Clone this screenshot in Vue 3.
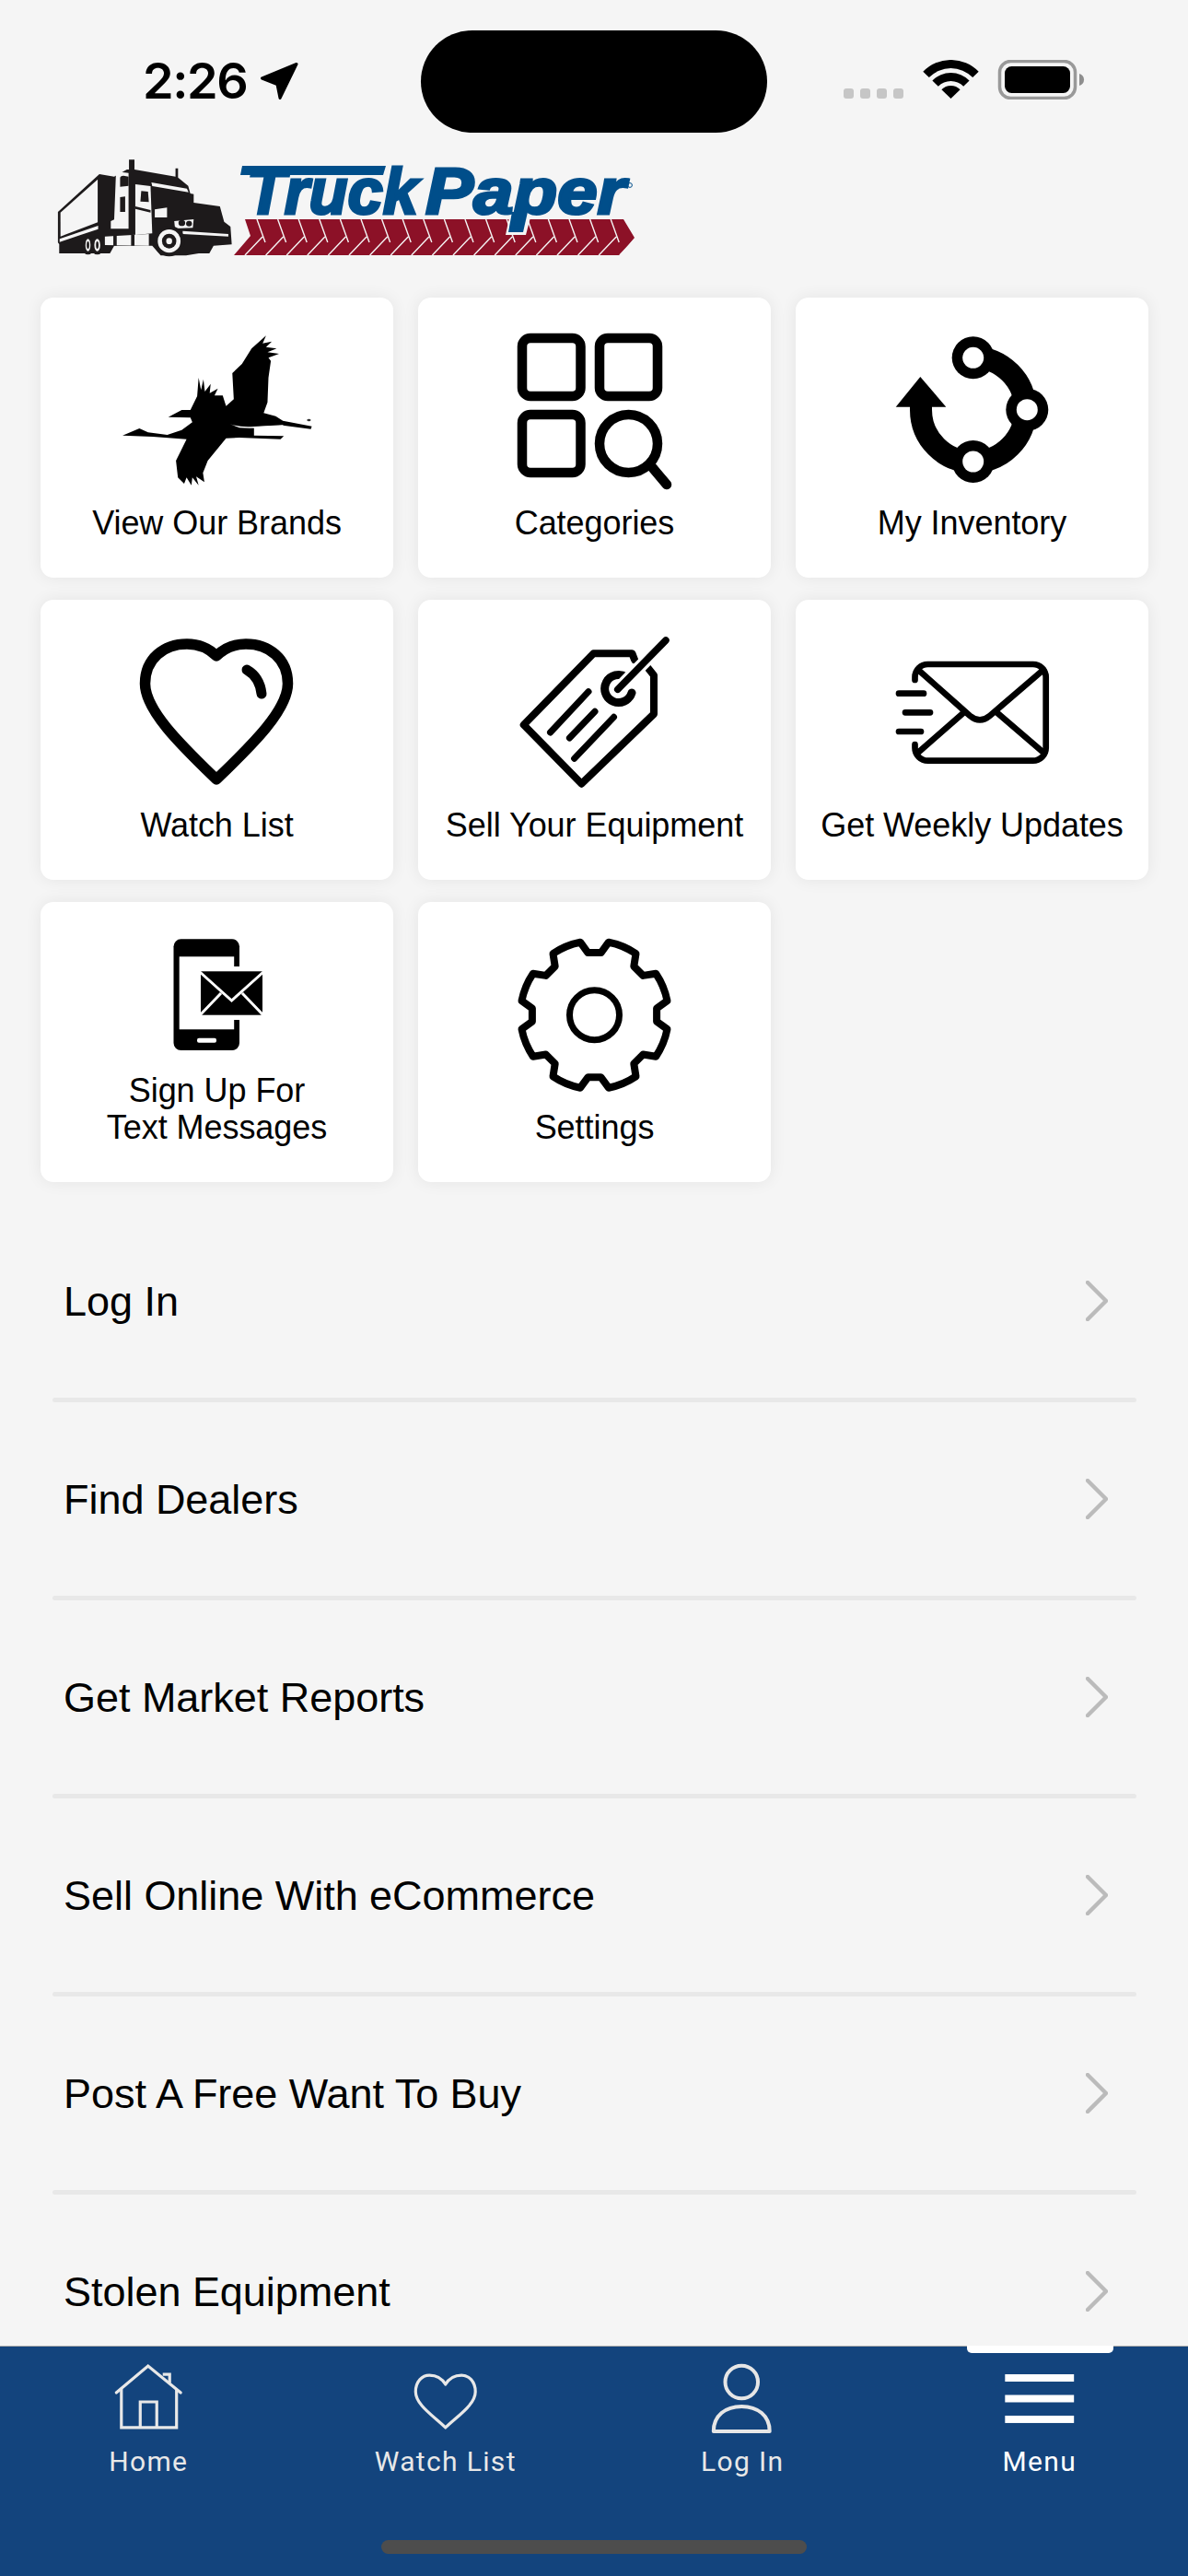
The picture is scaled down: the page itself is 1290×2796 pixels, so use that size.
<script setup>
const rows = ['Log In', 'Find Dealers', 'Get Market Reports', 'Sell Online With eCommerce', 'Post A Free Want To Buy', 'Stolen Equipment']

const chevrons = Array.from({ length: 19 }, (_, i) => {
  const x = 279 + i * 22.6
  return `M${x} 238 L${x + 9} 263 M${x + 6} 257 L${x - 13} 277`
})

function polar(cx, cy, r, deg) {
  const a = (deg - 90) * Math.PI / 180
  return [(cx + r * Math.cos(a)).toFixed(1), (cy + r * Math.sin(a)).toFixed(1)]
}

const gear = (() => {
  const c = [645.5, 1101.7]
  let d = ''
  for (let k = 0; k < 8; k++) {
    const m = k * 45
    const a = polar(c[0], c[1], 80.5, m - 11)
    const b = polar(c[0], c[1], 68, m - 6)
    const e = polar(c[0], c[1], 68, m + 6)
    const f = polar(c[0], c[1], 80.5, m + 11)
    const g = polar(c[0], c[1], 80.5, m + 34)
    d += `${k === 0 ? 'M' : 'L'}${a} L${b} L${e} L${f} A80.5 80.5 0 0 1 ${g} `
  }
  return d + 'Z'
})()

function sector(cx, cy, rIn, rOut, ang) {
  const a = polar(cx, cy, rOut, -ang)
  const b = polar(cx, cy, rOut, ang)
  if (rIn === 0) return `M${cx} ${cy} L${a} A${rOut} ${rOut} 0 0 1 ${b} Z`
  const e = polar(cx, cy, rIn, ang)
  const f = polar(cx, cy, rIn, -ang)
  return `M${a} A${rOut} ${rOut} 0 0 1 ${b} L${e} A${rIn} ${rIn} 0 0 0 ${f} Z`
}
const wifi = [sector(1032.5, 107, 0, 14, 46), sector(1032.5, 107, 19, 28, 46), sector(1032.5, 107, 33, 42, 46)]
</script>

<template>
  <div class="phone">
    <div class="page">
      <header class="status">
        <div class="clock">
          <span class="time">2:26</span>
          <svg class="arrow" viewBox="282 68 42 40" width="42" height="40">
            <path d="M322 69.5 L284.5 85 L301 91.5 L304 106.5 Z" fill="#000" stroke="#000" stroke-width="3" stroke-linejoin="round" />
          </svg>
        </div>
        <div class="island"></div>
        <svg class="sys" viewBox="916 65 262 43" width="262" height="43">
          <rect v-for="i in 4" :key="i" :x="916 + (i - 1) * 18" y="96" width="11" height="11" rx="3" fill="#c6c6c6" />
          <path v-for="p in wifi" :key="p" :d="p" fill="#000" />
          <rect x="1085.5" y="66.5" width="82" height="40" rx="12" fill="none" stroke="#999" stroke-width="3.5" />
          <rect x="1091" y="72" width="71" height="29" rx="7.5" fill="#000" />
          <path d="M1172 80 A8 7 0 0 1 1172 93 Z" fill="#8e8e8e" />
        </svg>
      </header>

      <svg class="logo" viewBox="50 160 650 150" width="650" height="150">
        <g transform="scale(0.4592 0.3333)" fill="#1d1a1b">
          <path d="M137 690 L235 567 L270 575 L300 552 L305 552 L305 520 L318 520 L318 552 L415 575 L415 548 L421 548 L421 578 L445 605 L450 630 L458 632 L458 660 L520 672 L530 722 L545 738 L548 796 L505 800 L495 825 L470 825 L440 832 L380 832 L360 800 L270 800 L260 825 L140 825 L140 795 L137 790 Z" />
          <path d="M143 692 L231 584 L231 724 L143 770 Z" fill="#f5f5f5" />
          <path d="M141 778 L232 735 L232 746 L141 788 Z" fill="#f5f5f5" />
          <path d="M274 572 Q274 560 285 560 L304 563 L304 745 L262 745 L262 720 L270 715 Z" fill="#f5f5f5" />
          <path d="M320 600 L356 606 L360 760 L320 765 Z" fill="#f5f5f5" />
          <path d="M284 580 Q284 572 292 572 L304 575 L304 605 L284 608 Z M284 642 L296 640 L296 690 L284 690 Z" />
          <path d="M334 622 L350 624 L352 658 L332 656 Z" />
          <path d="M320 672 L356 684 L356 692 L320 680 Z" />
          <path d="M358 594 L442 614 L446 626 L360 606 Z" fill="#f5f5f5" />
          <path d="M366 682 L395 676 L395 708 L366 708 Z" fill="#f5f5f5" />
          <path d="M412 720 L458 714 L456 742 L414 744 Z" fill="#f5f5f5" />
          <ellipse cx="430" cy="726" rx="8" ry="10" />
          <ellipse cx="447" cy="728" rx="7" ry="9" />
          <path d="M248 770 L352 762 L352 800 L248 798 Z" fill="#f5f5f5" />
          <path d="M268 768 h8 v32 h-8 z M310 765 h8 v35 h-8 z" />
          <path d="M432 752 L540 762 L540 770 L432 762 Z" fill="#f5f5f5" />
          <ellipse cx="400" cy="785" rx="37" ry="50" />
          <ellipse cx="400" cy="785" rx="27" ry="38" fill="#f5f5f5" />
          <ellipse cx="400" cy="785" rx="17" ry="24" />
          <ellipse cx="400" cy="785" rx="7" ry="10" fill="#f5f5f5" />
          <ellipse cx="208" cy="798" rx="16" ry="31" />
          <ellipse cx="230" cy="798" rx="17" ry="31" />
          <ellipse cx="208" cy="798" rx="6" ry="20" fill="#f5f5f5" />
          <ellipse cx="230" cy="798" rx="7" ry="20" fill="#f5f5f5" />
          <ellipse cx="208" cy="798" rx="3" ry="12" />
          <ellipse cx="230" cy="798" rx="3" ry="12" />
        </g>
        <path d="M266 238 L677 238 L689 258 L673 277 L254 277 L272 256 Z" fill="#8c1127" />
        <path v-for="c in chevrons" :key="c" :d="c" stroke="#f5f5f5" stroke-width="1.4" fill="none" />
        <path d="M553 236 L576 236 L571 255 L549 255 Z" fill="#f5f5f5" />
        <path d="M556 230 L573 230 L568 252 L552 252 Z" fill="#004e8a" />
        <text class="logo-text" x="268" y="232" textLength="186" lengthAdjust="spacingAndGlyphs">Truck</text>
        <path d="M263 180 L419 180 L416 190 L261 190 Z" fill="#004e8a" />
        <text class="logo-text" x="462" y="232" textLength="217" lengthAdjust="spacingAndGlyphs">Paper</text>
        <circle cx="684" cy="201" r="2.4" fill="none" stroke="#004e8a" stroke-width="1" />
      </svg>

      <section class="grid">
        <a class="card">
          <svg class="ic" viewBox="44 323 383 180" width="383" height="180">
            <g transform="translate(30 310) scale(0.523 0.3333)">
              <path d="M412 392 L428 370 L425 285 L445 255 L465 205 L495 163 L488 188 L507 182 L495 200 L517 205 L498 217 L522 222 L500 235 L505 245 L500 300 L498 380 L490 415 L515 425 L530 440 L590 458 L588 467 L530 455 L470 460 L470 488 L532 490 L525 500 L440 495 L412 497 L374 570 L364 610 L367 640 L350 622 L355 650 L342 625 L340 650 L330 625 L325 645 L312 625 L308 570 L330 500 L260 492 L197 488 L232 465 L250 478 L290 486 L320 470 L342 445 L338 430 L292 428 L320 405 L338 405 L352 360 L355 300 L360 340 L365 305 L368 345 L380 320 L378 350 L395 335 L388 358 L405 358 Z" fill="#000" />
              <path d="M420 451 Q440 462 470 459 L530 454 L531 457 L490 461 Q470 466 440 463 Z" fill="#fff" />
              <circle cx="584" cy="438" r="4" fill="#333" />
            </g>
          </svg>
          <span class="label">View Our Brands</span>
        </a>

        <a class="card">
          <svg class="ic" viewBox="454 323 383 180" width="383" height="180">
            <g fill="none" stroke="#000" stroke-width="10.5">
              <rect x="567" y="367" width="63.5" height="63" rx="9" />
              <rect x="651" y="367" width="63" height="63" rx="9" />
              <rect x="567" y="450" width="63.5" height="63" rx="9" />
              <circle cx="682.5" cy="481.5" r="31.5" />
              <path d="M708 507 L724 526" stroke-linecap="round" />
            </g>
          </svg>
          <span class="label">Categories</span>
        </a>

        <a class="card">
          <svg class="ic" viewBox="864 323 383 180" width="383" height="180">
            <path d="M1056.7 388 A56.7 56.7 0 1 1 1000 444.7 L1000 440" fill="none" stroke="#000" stroke-width="24" />
            <path d="M972.7 441.7 L999.3 409 L1027.3 441.7 Z" fill="#000" />
            <g fill="#000">
              <circle cx="1056.7" cy="388.3" r="23" />
              <circle cx="1115.3" cy="444.7" r="23" />
              <circle cx="1056.7" cy="501" r="23" />
            </g>
            <g fill="#fff">
              <circle cx="1056.7" cy="388.3" r="11.5" />
              <circle cx="1115.3" cy="444.7" r="11.5" />
              <circle cx="1056.7" cy="501" r="11.5" />
            </g>
          </svg>
          <span class="label">My Inventory</span>
        </a>

        <a class="card">
          <svg class="ic" viewBox="44 651 383 180" width="383" height="180">
            <path d="M235 846 C200 812 157.500 772 157.500 742 C157.500 715 178 699 203 699 C217 699 227 704 235 712 C243 704 253 699 267 699 C292 699 312.500 715 312.500 742 C312.500 772 270 812 235 846 Z" fill="none" stroke="#000" stroke-width="11.5" stroke-linejoin="round" />
            <path d="M268 727 Q282 735 284 753" fill="none" stroke="#000" stroke-width="11" stroke-linecap="round" />
          </svg>
          <span class="label">Watch List</span>
        </a>

        <a class="card">
          <svg class="ic" viewBox="454 651 383 180" width="383" height="180">
            <g fill="none" stroke="#000" stroke-linecap="round" stroke-linejoin="round">
              <path d="M689 716 L686.400 709.300 L644.500 709.300 L568.700 786.700 L631.500 850.700 L710 775 L710 733 L702 723" stroke-width="8" />
              <path d="M680 735 A15 15 0 1 0 686 752" stroke-width="9" />
              <path d="M670.700 748.300 L723 695" stroke="#fff" stroke-width="14" stroke-linecap="butt" />
              <path d="M670.700 748.300 L723 695" stroke-width="7.500" />
              <path d="M639 750.700 L597.500 795 M646 772.300 L618.400 801 M666.500 778.300 L623.600 823.300" stroke-width="7" />
            </g>
          </svg>
          <span class="label">Sell Your Equipment</span>
        </a>

        <a class="card">
          <svg class="ic" viewBox="864 651 383 180" width="383" height="180">
            <g fill="none" stroke="#000" stroke-width="6.700" stroke-linecap="round" stroke-linejoin="round">
              <path d="M993.500 738 L993.500 735 A14 14 0 0 1 1007.500 721 L1121.700 721 A14 14 0 0 1 1135.700 735 L1135.700 811.700 A14 14 0 0 1 1121.700 825.700 L1007.500 825.700 A14 14 0 0 1 993.500 811.700 L993.500 808" />
              <path d="M997 727 L1053 776.700 Q1064 786 1075 776.700 L1133 727" />
              <path d="M997 816.700 L1047 773 M1082 773 L1133 816.700" />
              <path d="M976 752.700 L1003 752.700 M983 773.300 L1010 773.300 M976 794 L1000 794" />
            </g>
          </svg>
          <span class="label">Get Weekly Updates</span>
        </a>

        <a class="card">
          <svg class="ic" viewBox="44 979 383 180" width="383" height="180">
            <rect x="188.500" y="1019.300" width="71.500" height="120.700" rx="8" fill="#000" />
            <rect x="194.700" y="1038.300" width="59.500" height="79" fill="#fff" />
            <rect x="254" y="1049" width="8" height="58" fill="#fff" />
            <rect x="214" y="1126.700" width="21" height="5" rx="2" fill="#fff" />
            <rect x="214" y="1050" width="75" height="56" fill="#fff" />
            <rect x="218" y="1054.300" width="67" height="47.400" fill="#000" />
            <path d="M217 1055 L251.500 1086 L286 1055 M217 1102 L240 1078 M286 1102 L263 1078" fill="none" stroke="#fff" stroke-width="3" />
          </svg>
          <span class="label">Sign Up For<br />Text Messages</span>
        </a>

        <a class="card">
          <svg class="ic" viewBox="454 979 383 180" width="383" height="180">
            <path :d="gear" fill="none" stroke="#000" stroke-width="8" stroke-linejoin="round" />
            <circle cx="645.500" cy="1101.700" r="27" fill="none" stroke="#000" stroke-width="7" />
          </svg>
          <span class="label">Settings</span>
        </a>
      </section>

      <ul class="list">
        <li v-for="r in rows" :key="r" class="row">
          <div class="row-body">
            <span class="row-text">{{ r }}</span>
            <svg class="chev" viewBox="0 0 24 44" width="24" height="44">
              <path d="M2 2 L22 22 L2 42" fill="none" stroke="#bbb" stroke-width="4.500" stroke-linecap="round" stroke-linejoin="round" />
            </svg>
          </div>
          <div class="sep"></div>
        </li>
      </ul>
    </div>

    <nav class="nav">
      <span class="tab-mark"></span>
      <div class="nav-item">
        <svg viewBox="0 2547 322.500 100" width="322" height="100">
          <g fill="none" stroke="#e8e8e8" stroke-width="3.200">
            <path d="M126.500 2597 L161 2568 L196.500 2597" stroke-linecap="round" />
            <path d="M132 2593 L132 2635 L192 2635 L192 2593" />
            <path d="M152.500 2635 L152.500 2607 L170.500 2607 L170.500 2635" />
            <path d="M177 2577 L184.500 2577 L184.500 2586" />
          </g>
        </svg>
        <span class="nav-label">Home</span>
      </div>
      <div class="nav-item">
        <svg viewBox="322.500 2547 322.500 100" width="322" height="100">
          <path d="M483.500 2635 C470 2622 451 2610 451 2596 C451 2585 458 2578 466 2578 C474 2578 480 2582 483.500 2588 C487 2582 493 2578 501 2578 C509 2578 516 2585 516 2596 C516 2610 497 2622 483.500 2635 Z" fill="none" stroke="#e8e8e8" stroke-width="3.200" stroke-linejoin="round" />
        </svg>
        <span class="nav-label">Watch List</span>
      </div>
      <div class="nav-item">
        <svg viewBox="645 2547 322.500 100" width="322" height="100">
          <g fill="none" stroke="#e6e6e6" stroke-width="4">
            <circle cx="805.500" cy="2585.500" r="17.800" />
            <path d="M775 2639 C775 2622 788 2612 805.500 2612 C823 2612 836 2622 836 2639 Z" stroke-linejoin="round" />
          </g>
        </svg>
        <span class="nav-label">Log In</span>
      </div>
      <div class="nav-item active">
        <svg viewBox="967.500 2547 322.500 100" width="322" height="100">
          <rect x="1091" y="2577" width="75" height="8" fill="#fff" />
          <rect x="1091" y="2599.500" width="75" height="8" fill="#fff" />
          <rect x="1091" y="2622" width="75" height="8" fill="#fff" />
        </svg>
        <span class="nav-label">Menu</span>
      </div>
      <span class="home-bar"></span>
    </nav>
  </div>
</template>

<style>
html, body { margin: 0; background: #f5f5f5; }
</style>

<style scoped>
.phone {
  width: 1290px;
  height: 2796px;
  display: flex;
  flex-direction: column;
  overflow: hidden;
  background: #f5f5f5;
  color: #000;
  font-family: "Liberation Sans", Arial, sans-serif;
}
.page { flex: 1; min-height: 0; overflow: hidden; }
.status { display: flex; align-items: flex-start; height: 160px; padding-top: 33px; box-sizing: border-box; }
.clock { display: flex; align-items: flex-start; margin-top: 25px; flex: none; box-sizing: border-box; padding-left: 155px; width: 457px; }
.time { font: 600 54px/60px Inter, "Liberation Sans", sans-serif; letter-spacing: -1.4px; }
.arrow { margin: 10px 0 0 14px; }
.island { width: 376px; height: 111px; border-radius: 56px; background: #000; flex: none; }
.sys { margin: 32px 0 0 83px; flex: none; }
.logo { display: block; margin-left: 50px; }
.logo-text { font: italic 700 71px "Liberation Sans", Arial, sans-serif; fill: #004e8a; stroke: #004e8a; stroke-width: 3px; }
.grid { display: grid; grid-template-columns: repeat(3, 383px); grid-auto-rows: 304px; gap: 24px 27px; padding-left: 44px; margin-top: 13px; }
.card { display: flex; flex-direction: column; justify-content: space-between; align-items: center; background: #fff; border-radius: 14px; box-shadow: 0 0 18px rgba(0, 0, 0, .07); padding-bottom: 39px; box-sizing: border-box; }
.ic { display: block; overflow: visible; flex: none; }
.label { font-size: 36px; line-height: 40px; text-align: center; letter-spacing: -0.05px; }
.list { list-style: none; margin: 24px 0 0; padding: 0; }
.row-body { height: 210px; display: flex; align-items: center; justify-content: space-between; padding: 0 87px 0 69px; }
.row-text { font-size: 45px; position: relative; top: 1px; letter-spacing: -0.03px; }
.chev { display: block; }
.sep { height: 5px; margin: 0 56px 0 57px; background: #e8e8e8; border-radius: 3px; }
.nav { position: relative; flex: none; height: 250px; box-sizing: border-box; display: flex; background: #13447d; border-top: 1px solid #aaa; }
.nav-item { flex: 1 1 0; display: flex; flex-direction: column; align-items: center; }
.nav-item svg { display: block; }
.nav-label { font: 400 30px/36px Roboto, "Liberation Sans", sans-serif; letter-spacing: 1.35px; color: #e8e8e8; margin-top: 7px; }
.active .nav-label { color: #fff; }
.tab-mark { position: absolute; left: 1050px; width: 159px; top: -1px; height: 8px; background: #fff; border-radius: 0 0 5px 5px; }
.home-bar { position: absolute; left: 414px; width: 462px; top: 210px; height: 15px; border-radius: 8px; background: #4d4d4d; }
</style>
